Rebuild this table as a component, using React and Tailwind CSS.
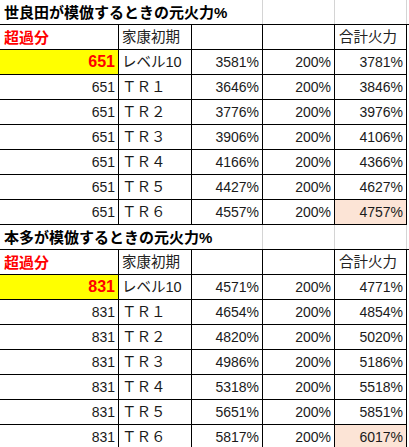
import React from "react";

const FONT = "font-['Liberation_Sans','Noto_Sans_CJK_JP',sans-serif]";

function TitleRow({ text }) {
  return (
    <div className="flex h-[25px] border-b border-black">
      <div className="w-[263px] border-r border-[#d4d4d4] flex items-center pl-[4px]">
        <span className="whitespace-nowrap font-bold text-[15px] text-black leading-none">{text}</span>
      </div>
      <div className="w-[72px] border-r border-[#d4d4d4]" />
      <div className="w-[72px] border-r border-[#d4d4d4]" />
    </div>
  );
}

const cell = "h-[25px] border-r border-b border-black flex items-center";

function Table({ title, base, rows }) {
  return (
    <div>
      <TitleRow text={title} />
      <div className="grid grid-cols-[119px_73px_71px_72px_72px] w-[407px]">
        <div className={`${cell} pl-[4px] text-[15px] font-bold text-[#ff0000]`}>超過分</div>
        <div className={`${cell} pl-[3px] text-[14.5px] text-[#222]`}>家康初期</div>
        <div className={cell} />
        <div className={cell} />
        <div className={`${cell} pl-[4px] text-[14.5px] text-[#222]`}>合計火力</div>
        {rows.map((r, i) => (
          <React.Fragment key={i}>
            {i === 0 ? (
              <div className={`${cell} justify-end pr-[3px] bg-[#ffff00] text-[16px] font-bold text-[#ff0000]`}>{base}</div>
            ) : (
              <div className={`${cell} justify-end pr-[3px] text-[14px] text-[#1a1a1a]`}>{base}</div>
            )}
            <div className={`${cell} pl-[3px] text-[14.5px] text-[#1a1a1a]`}>{r.label}</div>
            <div className={`${cell} justify-end pr-[3px] text-[14px] text-[#1a1a1a]`}>{r.c}%</div>
            <div className={`${cell} justify-end pr-[3px] text-[14px] text-[#1a1a1a]`}>200%</div>
            <div
              className={`${cell} justify-end pr-[3px] text-[14px] text-[#1a1a1a] ${
                i === rows.length - 1 ? "bg-[#fce4d6]" : ""
              }`}
            >
              {r.e}%
            </div>
          </React.Fragment>
        ))}
      </div>
    </div>
  );
}

const labels = ["レベル10", "ＴＲ１", "ＴＲ２", "ＴＲ３", "ＴＲ４", "ＴＲ５", "ＴＲ６"];

const t1c = [3581, 3646, 3776, 3906, 4166, 4427, 4557];
const t1e = [3781, 3846, 3976, 4106, 4366, 4627, 4757];
const t2c = [4571, 4654, 4820, 4986, 5318, 5651, 5817];
const t2e = [4771, 4854, 5020, 5186, 5518, 5851, 6017];

export default function App() {
  const rows1 = labels.map((l, i) => ({ label: l, c: t1c[i], e: t1e[i] }));
  const rows2 = labels.map((l, i) => ({ label: l, c: t2c[i], e: t2e[i] }));
  return (
    <div className={`${FONT} w-[409px] h-[447px] overflow-hidden bg-white leading-none`}>
      <Table title="世良田が模倣するときの元火力%" base={651} rows={rows1} />
      <Table title="本多が模倣するときの元火力%" base={831} rows={rows2} />
    </div>
  );
}
